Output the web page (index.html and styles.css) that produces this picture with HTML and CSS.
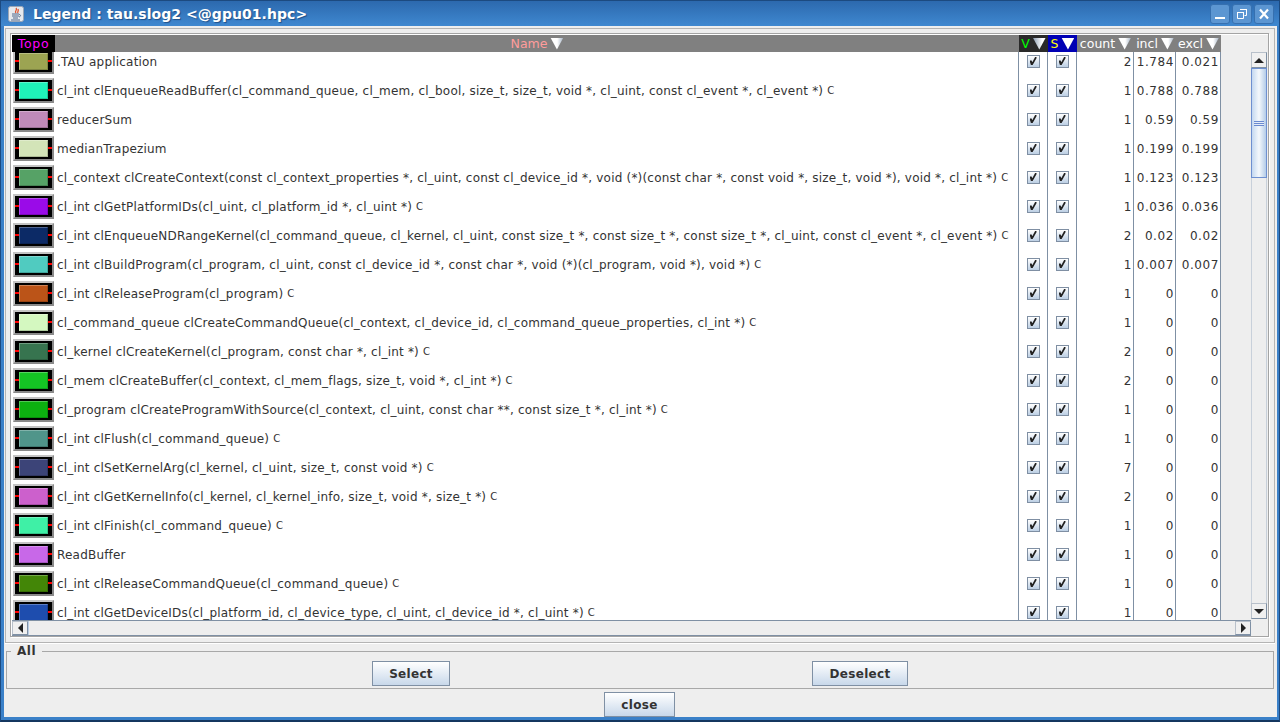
FILE: index.html
```html
<!DOCTYPE html>
<html lang="en">
<head>
<meta charset="utf-8">
<title>Legend : tau.slog2 &lt;@gpu01.hpc&gt;</title>
<link rel="stylesheet" href="styles.css">
</head>
<body>
<div class="window">
  <header class="titlebar">
    <svg class="appicon" width="16" height="16" viewBox="0 0 16 16"><rect x="0.5" y="0.5" width="15" height="15" rx="2" fill="#e6e9ee" stroke="#9aa6b6"/><path d="M8 2c2 2-2 3 0 5M10 3c1 2-1 3 0 4" stroke="#e0522a" stroke-width="1.300" fill="none"/><path d="M4 8h7M4 10h7M5 12h5" stroke="#50698c" stroke-width="1"/><path d="M11 8.500c2 0 2 2 0 2.500M3 14h9" stroke="#50698c" fill="none"/></svg>
    <span class="wintitle">Legend : tau.slog2 &lt;@gpu01.hpc&gt;</span>
    <div class="winbtns">
      <span class="winbtn"><svg width="18" height="18" viewBox="0 0 18 18"><rect x="4" y="12" width="10" height="2" fill="#fff"/></svg></span>
      <span class="winbtn"><svg width="18" height="18" viewBox="0 0 18 18"><path d="M7.500 4.500h6v6h-2M4.500 7.500h6v6h-6z" fill="none" stroke="#fff"/><path d="M7 4.500h7M4 7.500h7" stroke="#fff"/></svg></span>
      <span class="winbtn"><svg width="18" height="18" viewBox="0 0 18 18"><path d="M5 4.500l8 9M13 4.500l-8 9" stroke="#fff" stroke-width="2.200"/></svg></span>
    </div>
  </header>
  <main class="client">
    <div class="outerframe">
    <section class="scrollpane">
      <div class="pane-top">
        <div class="viewport">
          <div class="thead">
            <div class="th col-topo topo-h">Topo</div>
            <div class="th col-name name-h">Name<i class="tri"></i></div>
            <div class="th col-v v-h">V<i class="tri tri-dim"></i></div>
            <div class="th col-s s-h">S<i class="tri tri-bright"></i></div>
            <div class="th col-count">count<i class="tri"></i></div>
            <div class="th col-incl">incl<i class="tri"></i></div>
            <div class="th col-excl">excl<i class="tri"></i></div>
          </div>
          <div class="tbody">
            <div class="row"><div class="col-topo"><span class="swatch"><span class="chip" style="background:#9ca452"></span></span></div><div class="cell col-name">.TAU application</div><div class="cell col-v"><i class="chk"></i></div><div class="cell col-s"><i class="chk"></i></div><div class="cell num col-count">2</div><div class="cell num col-incl">1.784</div><div class="cell num col-excl">0.021</div></div>
            <div class="row"><div class="col-topo"><span class="swatch"><span class="chip" style="background:#1ff3b9"></span></span></div><div class="cell col-name">cl_int clEnqueueReadBuffer(cl_command_queue, cl_mem, cl_bool, size_t, size_t, void *, cl_uint, const cl_event *, cl_event *) <small>C</small></div><div class="cell col-v"><i class="chk"></i></div><div class="cell col-s"><i class="chk"></i></div><div class="cell num col-count">1</div><div class="cell num col-incl">0.788</div><div class="cell num col-excl">0.788</div></div>
            <div class="row"><div class="col-topo"><span class="swatch"><span class="chip" style="background:#bf8ab9"></span></span></div><div class="cell col-name">reducerSum</div><div class="cell col-v"><i class="chk"></i></div><div class="cell col-s"><i class="chk"></i></div><div class="cell num col-count">1</div><div class="cell num col-incl">0.59</div><div class="cell num col-excl">0.59</div></div>
            <div class="row"><div class="col-topo"><span class="swatch"><span class="chip" style="background:#d3e4b8"></span></span></div><div class="cell col-name">medianTrapezium</div><div class="cell col-v"><i class="chk"></i></div><div class="cell col-s"><i class="chk"></i></div><div class="cell num col-count">1</div><div class="cell num col-incl">0.199</div><div class="cell num col-excl">0.199</div></div>
            <div class="row"><div class="col-topo"><span class="swatch"><span class="chip" style="background:#56a266"></span></span></div><div class="cell col-name">cl_context clCreateContext(const cl_context_properties *, cl_uint, const cl_device_id *, void (*)(const char *, const void *, size_t, void *), void *, cl_int *) <small>C</small></div><div class="cell col-v"><i class="chk"></i></div><div class="cell col-s"><i class="chk"></i></div><div class="cell num col-count">1</div><div class="cell num col-incl">0.123</div><div class="cell num col-excl">0.123</div></div>
            <div class="row"><div class="col-topo"><span class="swatch"><span class="chip" style="background:#9a0be8"></span></span></div><div class="cell col-name">cl_int clGetPlatformIDs(cl_uint, cl_platform_id *, cl_uint *) <small>C</small></div><div class="cell col-v"><i class="chk"></i></div><div class="cell col-s"><i class="chk"></i></div><div class="cell num col-count">1</div><div class="cell num col-incl">0.036</div><div class="cell num col-excl">0.036</div></div>
            <div class="row"><div class="col-topo"><span class="swatch"><span class="chip" style="background:#0c2a66"></span></span></div><div class="cell col-name">cl_int clEnqueueNDRangeKernel(cl_command_queue, cl_kernel, cl_uint, const size_t *, const size_t *, const size_t *, cl_uint, const cl_event *, cl_event *) <small>C</small></div><div class="cell col-v"><i class="chk"></i></div><div class="cell col-s"><i class="chk"></i></div><div class="cell num col-count">2</div><div class="cell num col-incl">0.02</div><div class="cell num col-excl">0.02</div></div>
            <div class="row"><div class="col-topo"><span class="swatch"><span class="chip" style="background:#50cbc0"></span></span></div><div class="cell col-name">cl_int clBuildProgram(cl_program, cl_uint, const cl_device_id *, const char *, void (*)(cl_program, void *), void *) <small>C</small></div><div class="cell col-v"><i class="chk"></i></div><div class="cell col-s"><i class="chk"></i></div><div class="cell num col-count">1</div><div class="cell num col-incl">0.007</div><div class="cell num col-excl">0.007</div></div>
            <div class="row"><div class="col-topo"><span class="swatch"><span class="chip" style="background:#bb5418"></span></span></div><div class="cell col-name">cl_int clReleaseProgram(cl_program) <small>C</small></div><div class="cell col-v"><i class="chk"></i></div><div class="cell col-s"><i class="chk"></i></div><div class="cell num col-count">1</div><div class="cell num col-incl">0</div><div class="cell num col-excl">0</div></div>
            <div class="row"><div class="col-topo"><span class="swatch"><span class="chip" style="background:#d4f8c0"></span></span></div><div class="cell col-name">cl_command_queue clCreateCommandQueue(cl_context, cl_device_id, cl_command_queue_properties, cl_int *) <small>C</small></div><div class="cell col-v"><i class="chk"></i></div><div class="cell col-s"><i class="chk"></i></div><div class="cell num col-count">1</div><div class="cell num col-incl">0</div><div class="cell num col-excl">0</div></div>
            <div class="row"><div class="col-topo"><span class="swatch"><span class="chip" style="background:#37744f"></span></span></div><div class="cell col-name">cl_kernel clCreateKernel(cl_program, const char *, cl_int *) <small>C</small></div><div class="cell col-v"><i class="chk"></i></div><div class="cell col-s"><i class="chk"></i></div><div class="cell num col-count">2</div><div class="cell num col-incl">0</div><div class="cell num col-excl">0</div></div>
            <div class="row"><div class="col-topo"><span class="swatch"><span class="chip" style="background:#14c424"></span></span></div><div class="cell col-name">cl_mem clCreateBuffer(cl_context, cl_mem_flags, size_t, void *, cl_int *) <small>C</small></div><div class="cell col-v"><i class="chk"></i></div><div class="cell col-s"><i class="chk"></i></div><div class="cell num col-count">2</div><div class="cell num col-incl">0</div><div class="cell num col-excl">0</div></div>
            <div class="row"><div class="col-topo"><span class="swatch"><span class="chip" style="background:#0cb010"></span></span></div><div class="cell col-name">cl_program clCreateProgramWithSource(cl_context, cl_uint, const char **, const size_t *, cl_int *) <small>C</small></div><div class="cell col-v"><i class="chk"></i></div><div class="cell col-s"><i class="chk"></i></div><div class="cell num col-count">1</div><div class="cell num col-incl">0</div><div class="cell num col-excl">0</div></div>
            <div class="row"><div class="col-topo"><span class="swatch"><span class="chip" style="background:#50958a"></span></span></div><div class="cell col-name">cl_int clFlush(cl_command_queue) <small>C</small></div><div class="cell col-v"><i class="chk"></i></div><div class="cell col-s"><i class="chk"></i></div><div class="cell num col-count">1</div><div class="cell num col-incl">0</div><div class="cell num col-excl">0</div></div>
            <div class="row"><div class="col-topo"><span class="swatch"><span class="chip" style="background:#3c4478"></span></span></div><div class="cell col-name">cl_int clSetKernelArg(cl_kernel, cl_uint, size_t, const void *) <small>C</small></div><div class="cell col-v"><i class="chk"></i></div><div class="cell col-s"><i class="chk"></i></div><div class="cell num col-count">7</div><div class="cell num col-incl">0</div><div class="cell num col-excl">0</div></div>
            <div class="row"><div class="col-topo"><span class="swatch"><span class="chip" style="background:#cc60cc"></span></span></div><div class="cell col-name">cl_int clGetKernelInfo(cl_kernel, cl_kernel_info, size_t, void *, size_t *) <small>C</small></div><div class="cell col-v"><i class="chk"></i></div><div class="cell col-s"><i class="chk"></i></div><div class="cell num col-count">2</div><div class="cell num col-incl">0</div><div class="cell num col-excl">0</div></div>
            <div class="row"><div class="col-topo"><span class="swatch"><span class="chip" style="background:#3ff0a6"></span></span></div><div class="cell col-name">cl_int clFinish(cl_command_queue) <small>C</small></div><div class="cell col-v"><i class="chk"></i></div><div class="cell col-s"><i class="chk"></i></div><div class="cell num col-count">1</div><div class="cell num col-incl">0</div><div class="cell num col-excl">0</div></div>
            <div class="row"><div class="col-topo"><span class="swatch"><span class="chip" style="background:#c868e8"></span></span></div><div class="cell col-name">ReadBuffer</div><div class="cell col-v"><i class="chk"></i></div><div class="cell col-s"><i class="chk"></i></div><div class="cell num col-count">1</div><div class="cell num col-incl">0</div><div class="cell num col-excl">0</div></div>
            <div class="row"><div class="col-topo"><span class="swatch"><span class="chip" style="background:#438607"></span></span></div><div class="cell col-name">cl_int clReleaseCommandQueue(cl_command_queue) <small>C</small></div><div class="cell col-v"><i class="chk"></i></div><div class="cell col-s"><i class="chk"></i></div><div class="cell num col-count">1</div><div class="cell num col-incl">0</div><div class="cell num col-excl">0</div></div>
            <div class="row"><div class="col-topo"><span class="swatch"><span class="chip" style="background:#1e4dae"></span></span></div><div class="cell col-name">cl_int clGetDeviceIDs(cl_platform_id, cl_device_type, cl_uint, cl_device_id *, cl_uint *) <small>C</small></div><div class="cell col-v"><i class="chk"></i></div><div class="cell col-s"><i class="chk"></i></div><div class="cell num col-count">1</div><div class="cell num col-incl">0</div><div class="cell num col-excl">0</div></div>
          </div>
        </div>
        <div class="vbar">
          <span class="sbtn"><i class="arr-up"></i></span>
          <div class="vtrack"><div class="vthumb"><span class="grip"></span></div></div>
          <span class="sbtn"><i class="arr-down"></i></span>
        </div>
      </div>
      <div class="hbar">
        <span class="sbtn hbtn"><i class="arr-left"></i></span>
        <div class="htrack"></div>
        <span class="sbtn hbtn"><i class="arr-right"></i></span>
      </div>
    </section>
    </div>
    <fieldset class="allbox">
      <legend>All</legend>
      <div class="allbtns">
        <button class="btn btn-select" type="button">Select</button>
        <button class="btn btn-deselect" type="button">Deselect</button>
      </div>
    </fieldset>
    <div class="closebar"><button class="btn btn-close" type="button">close</button></div>
  </main>
</div>
</body>
</html>
```
FILE: styles.css
```css
* { box-sizing: border-box; }
html, body { margin: 0; padding: 0; width: 1280px; height: 722px; overflow: hidden; }
body { font-family: "DejaVu Sans", sans-serif; font-size: 12px; color: #333; }
.window { width: 1280px; height: 722px; display: flex; flex-direction: column; background: #3a80c8; border: 1px solid #1c4a80; border-top: 0; border-right-color: #1c4a80; border-bottom: 2px solid #14365f; }
.titlebar { height: 26px; flex: none; display: flex; align-items: center; padding: 1px 5px 0 7px; background: linear-gradient(#2c69ae, #3f88d0); border-top: 1px solid #1c4a80; }
.appicon { flex: none; }
.wintitle { margin-left: 9px; color: #fff; font-weight: bold; font-size: 14px; text-shadow: 1px 1px 1px #1f4f88; white-space: nowrap; letter-spacing: 0.05px; }
.winbtns { margin-left: auto; display: flex; gap: 2px; }
.winbtn { width: 20px; height: 20px; display: flex; align-items: center; justify-content: center; background: #5c96d2; border: 1px solid #3670b0; border-radius: 3px; }
.client { flex: 1; margin: 0 2px 3px 3px; background: #eee; display: flex; flex-direction: column; padding: 2px 2px 0 1px; min-height: 0; }
.outerframe { flex: none; height: 615px; border: 1px solid #b4b4b4; padding: 4px 5px 5px 4px; box-shadow: 0 1px #fff; }
.scrollpane { height: 604px; display: flex; flex-direction: column; border: 1px solid #a4a4a4; padding: 1px 0 0 1px; background: #eee; box-shadow: inset 1px 1px #fff, 1px 1px #fff; }
.pane-top { height: 585px; flex: none; display: flex; }
.viewport { width: 1239px; flex: none; overflow: hidden; }
.thead { display: flex; width: 1209px; height: 17px; background: #808080; }
.th { height: 17px; color: #fff; font-size: 12.5px; line-height: 17px; display: flex; align-items: center; justify-content: center; gap: 3px; }
.name-h { color: #ff9c9c; }
.v-h { background: #2a2a2a; color: #00ff00; }
.s-h { background: #0000b4; color: #ffff00; }
.col-topo { width: 43px; flex: none; }
.th.topo-h { background: #000; color: #ff00ff; letter-spacing: 0.7px; }
.col-name { width: 964px; flex: none; }
.col-v, .col-s { width: 29px; flex: none; }
.col-count { width: 57px; flex: none; }
.col-incl { width: 42px; flex: none; }
.col-excl { width: 45px; flex: none; }
.tri { width: 13px; height: 12px; flex: none; display: block; clip-path: polygon(0 0, 100% 0, 50% 100%); background: linear-gradient(90deg, #fff 55%, #a8b6c6); }
.tri-dim { background: linear-gradient(90deg, #8c9db2, #fff 70%); }
.tri-bright { background: #fff; }
.tbody { width: 1209px; height: 568px; overflow: hidden; background: #fff; }
.row { display: flex; height: 29px; background: #fff; }
.row:first-child { margin-top: -5px; }
.cell { height: 29px; display: flex; align-items: center; white-space: nowrap; border-right: 1px solid #7f90a4; letter-spacing: 0.2px; }
.cell.col-name { padding-left: 2px; }
.cell small { font-size: 10px; margin-left: 4px; }
.cell.col-v, .cell.col-s { justify-content: center; }
.num { justify-content: flex-end; padding-right: 1px; }
.cell.num { letter-spacing: 0.6px; }
.chk { display: block; width: 13px; height: 13px; border: 1px solid #7f8fa3; background: linear-gradient(#fff, #bccfe4); position: relative; }
.chk::after { content: ""; position: absolute; left: 2px; top: 1px; width: 7px; height: 8px; background: #222; clip-path: polygon(0 45%, 30% 45%, 40% 65%, 80% 0, 100% 0, 100% 15%, 45% 100%, 20% 100%); }
.swatch { display: block; margin: 2px 0 0 1px; width: 41px; height: 25px; background: #000; border: 2px solid; border-color: #c4c4c4 #8a8a8a #8a8a8a #c4c4c4; padding: 2px 4px; position: relative; }
.swatch::before { content: ""; position: absolute; left: 0; right: 0; top: 9px; height: 2px; background: #f00; }
.chip { display: block; height: 100%; position: relative; border: 1px solid rgba(255,255,255,.28); border-right-color: rgba(0,0,0,.18); border-bottom-color: rgba(0,0,0,.18); }
.vbar { width: 16px; flex: none; margin-top: 17px; display: flex; flex-direction: column; height: 567px; }
.sbtn { width: 16px; height: 16px; flex: none; display: flex; align-items: center; justify-content: center; background: #f0f0f0; border: 1px solid #b8c0ca; border-right-color: #7f90a4; border-bottom-color: #7f90a4; }
.vtrack { flex: 1; background: #eee; border-left: 1px solid #c8d0da; border-right: 1px solid #c8d0da; }
.vthumb { height: 110px; margin: 0 -1px; background: linear-gradient(90deg, #c4d8f0, #f4f8fc 50%, #b4cce8); border: 1px solid #6e90d0; display: flex; align-items: center; justify-content: center; }
.grip { width: 10px; height: 5px; background: repeating-linear-gradient(#6a8ad0 0 1px, #e4ecf8 1px 2px); }
.arr-up { border-left: 5px solid transparent; border-right: 5px solid transparent; border-bottom: 5px solid #222; }
.arr-down { border-left: 5px solid transparent; border-right: 5px solid transparent; border-top: 5px solid #222; }
.arr-left { border-top: 5px solid transparent; border-bottom: 5px solid transparent; border-right: 5px solid #222; }
.arr-right { border-top: 5px solid transparent; border-bottom: 5px solid transparent; border-left: 5px solid #222; }
.hbar { width: 1239px; height: 16px; flex: none; display: flex; border-top: 1px solid #7f90a4; border-bottom: 1px solid #7f90a4; background: #eee; }
.hbtn { height: 14px; }
.htrack { flex: 1; background: #eee; border-left: 1px solid #b8cce4; }
.allbox { height: 45px; flex: none; margin: 1px 1px 0; padding: 0; border: 1px solid #a8a8a8; min-width: 0; }
.allbox legend { margin-left: 4px; padding: 0 6px; font-weight: bold; font-size: 12px; letter-spacing: 0.5px; line-height: 14px; }
.allbtns { display: flex; padding: 3px 0 0 365px; }
.btn { font-family: "DejaVu Sans", sans-serif; font-weight: bold; font-size: 12px; color: #333; background: linear-gradient(#fff, #c8d8ea); border: 1px solid #7f90a4; padding: 0; height: 25px; letter-spacing: 0.3px; }
.btn-select { width: 78px; }
.btn-deselect { width: 96px; margin-left: 362px; }
.closebar { display: flex; justify-content: center; margin-top: 3px; flex: none; padding-right: 1px; }
.btn-close { width: 71px; }
```
